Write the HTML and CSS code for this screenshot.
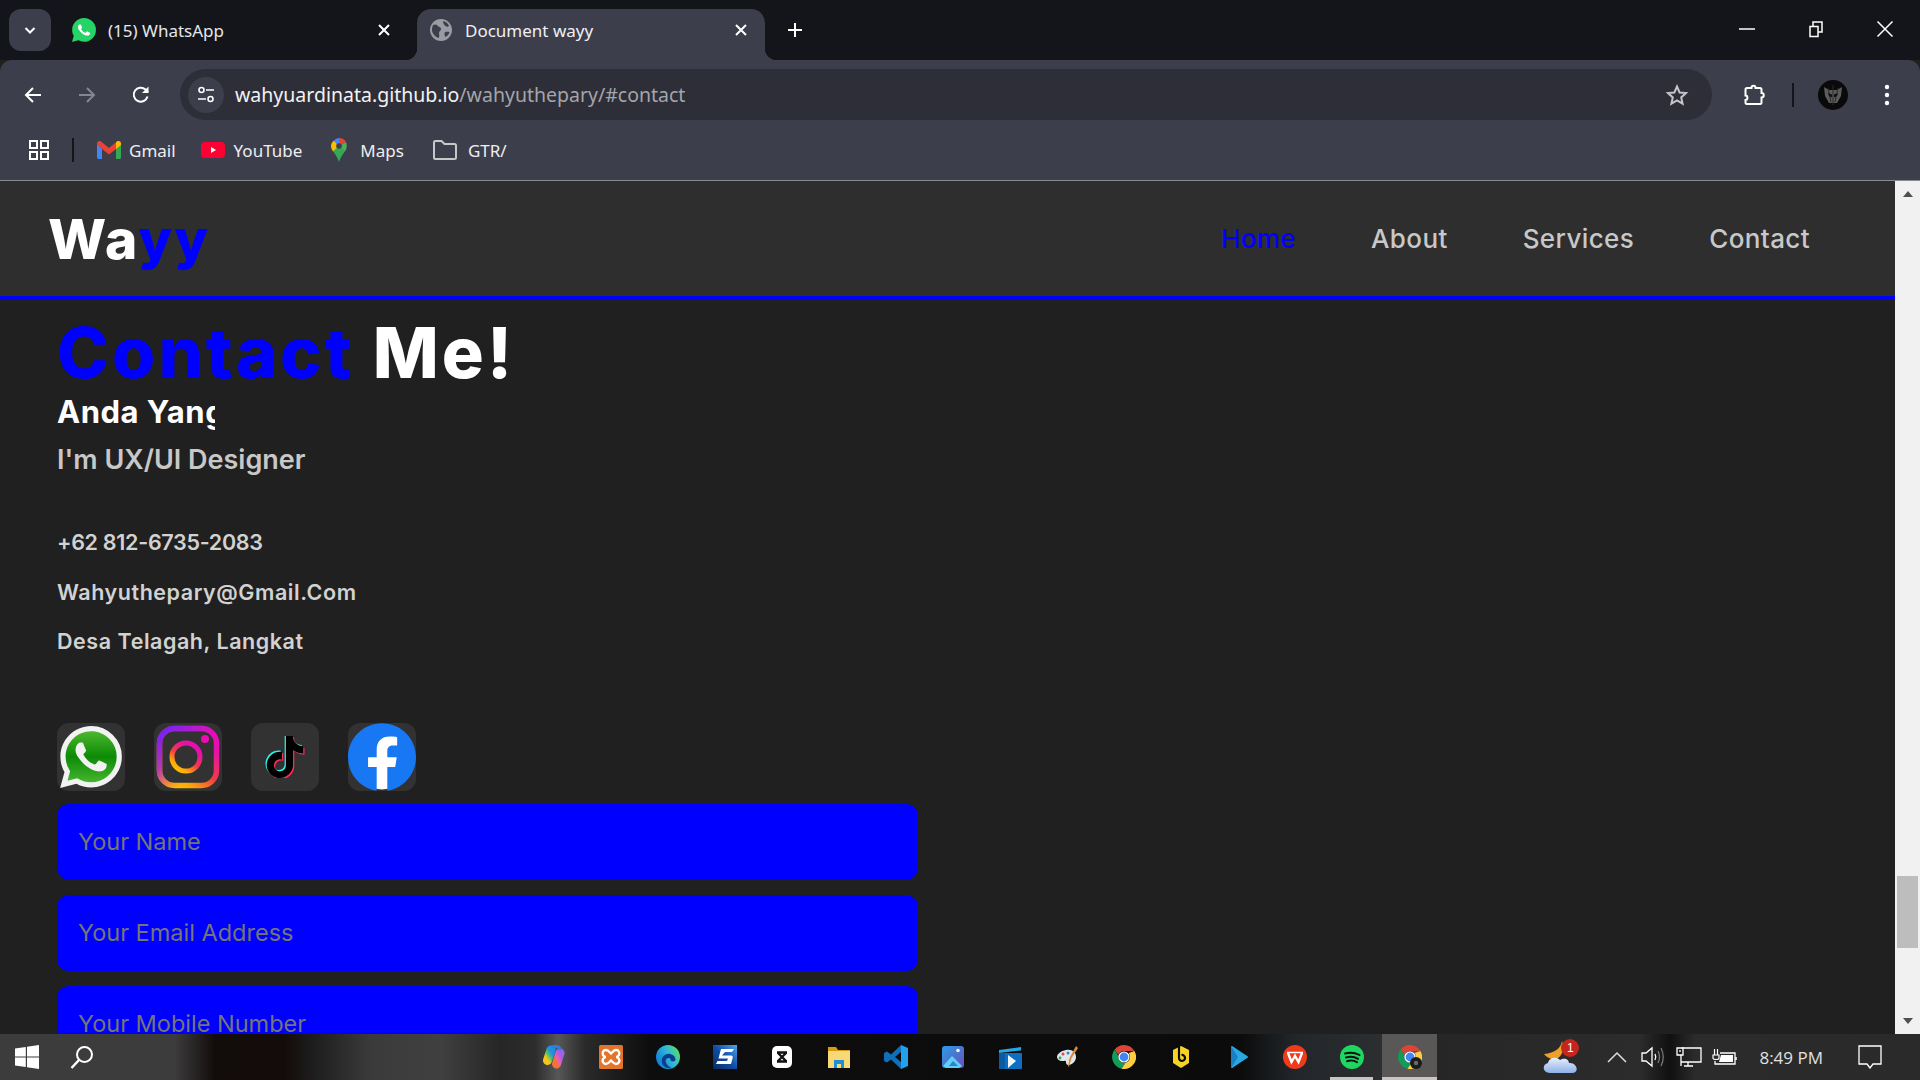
FILE: index.html
```html
<!DOCTYPE html>
<html lang="en">
<head>
    <meta charset="UTF-8">
    <meta name="viewport" content="width=device-width, initial-scale=1.0">
    <title>Document wayy</title>
    <link rel="stylesheet" href="styles.css">
</head>
<body>
    <!-- browser tabs -->
    <div class="tabstrip">
        <button class="tab-search" aria-label="Search tabs">
            <svg width="14" height="14" viewBox="0 0 14 14"><path d="M2.500 5 7 9.500 11.500 5" fill="none" stroke="#fff" stroke-width="2"/></svg>
        </button>
        <div class="tab tab-idle">
            <svg class="favicon" viewBox="0 0 24 24">
                <path fill="#25d366" d="M12.050 0C5.495 0 .16 5.335.157 11.892c0 2.096.547 4.142 1.588 5.945L.057 24l6.305-1.654a11.882 11.882 0 005.683 1.448h.005c6.554 0 11.89-5.335 11.893-11.893A11.821 11.821 0 0020.463 3.488 11.815 11.815 0 0012.050 0z"/>
                <path fill="#fff" d="M17.472 14.382c-.297-.149-1.758-.867-2.03-.967-.273-.099-.471-.148-.67.15-.197.297-.767.966-.94 1.164-.173.199-.347.223-.644.075-.297-.15-1.255-.463-2.39-1.475-.883-.788-1.48-1.761-1.653-2.059-.173-.297-.018-.458.13-.606.134-.133.298-.347.446-.52.149-.174.198-.298.298-.497.099-.198.05-.371-.025-.52-.075-.149-.669-1.612-.916-2.207-.242-.579-.487-.5-.669-.51-.173-.008-.371-.01-.57-.01-.198 0-.52.074-.792.372-.272.297-1.04 1.016-1.04 2.479 0 1.462 1.065 2.875 1.213 3.074.149.198 2.096 3.2 5.077 4.487.709.306 1.262.489 1.694.625.712.227 1.36.195 1.871.118.571-.085 1.758-.719 2.006-1.413.248-.694.248-1.289.173-1.413-.074-.124-.272-.198-.57-.347z"/>
            </svg>
            <span class="tab-title">(15) WhatsApp</span>
            <svg class="tab-close" viewBox="0 0 12 12"><path d="M1 1l10 10M11 1 1 11" stroke="#fff" stroke-width="2"/></svg>
        </div>
        <div class="tab tab-active">
            <svg class="favicon" viewBox="0 0 24 24">
                <circle cx="12" cy="12" r="11" fill="#9a9ba3"/>
                <path fill="#3d3e4b" d="M4 7c2-1 4-.5 5 1s3 1 3 3-2 2-2 4 1 3-.5 5C6 19 3 15 3 12c0-2 .4-3.500 1-5zM14 3c3 .5 5 2.500 6 5-1 1-2.500 1-3.500 0S14 6 14 3zM16 14c1.500-.5 3-.5 4.500 0-.5 2-2 4-4 5-1-1-1.500-3.500-.5-5z"/>
            </svg>
            <span class="tab-title">Document wayy</span>
            <svg class="tab-close" viewBox="0 0 12 12"><path d="M1 1l10 10M11 1 1 11" stroke="#fff" stroke-width="2"/></svg>
        </div>
        <svg class="new-tab" viewBox="0 0 16 16"><path d="M8 1v14M1 8h14" stroke="#fff" stroke-width="2"/></svg>
        <div class="window-btns">
            <svg viewBox="0 0 18 18" class="win-btn"><path d="M1 9h16" stroke="#fff" stroke-width="1.500"/></svg>
            <svg viewBox="0 0 18 18" class="win-btn"><path d="M3 6.500h8v10H3zM6 6V2h9v10h-3.500" fill="none" stroke="#fff" stroke-width="1.500"/></svg>
            <svg viewBox="0 0 18 18" class="win-btn"><path d="M1.500 1.500l15 15M16.500 1.500l-15 15" stroke="#fff" stroke-width="1.500"/></svg>
        </div>
    </div>

    <!-- address bar -->
    <div class="toolbar">
        <div class="nav-btns">
            <svg viewBox="0 0 20 20" class="nav-btn"><path d="M18 10H3M10 3l-7 7 7 7" fill="none" stroke="#fff" stroke-width="2"/></svg>
            <svg viewBox="0 0 20 20" class="nav-btn"><path d="M2 10h15M10 3l7 7-7 7" fill="none" stroke="#85868f" stroke-width="2"/></svg>
            <svg viewBox="0 0 20 20" class="nav-btn"><path d="M16.500 11.500A7 7 0 1 1 14.500 4.500L17 7" fill="none" stroke="#fff" stroke-width="2"/><path d="M17.500 1.500v6.500H11z" fill="#fff"/></svg>
        </div>
        <div class="omnibox">
            <span class="site-info">
                <svg viewBox="0 0 20 20" width="20" height="20"><circle cx="5.500" cy="5" r="2.500" fill="none" stroke="#fff" stroke-width="1.600"/><path d="M10 5h8M2 14h8" stroke="#fff" stroke-width="1.600"/><circle cx="14.500" cy="14" r="2.500" fill="none" stroke="#fff" stroke-width="1.600"/></svg>
            </span>
            <span class="url">wahyuardinata.github.io<span class="url-path">/wahyuthepary/#contact</span></span>
            <svg class="star" viewBox="0 0 24 24"><path d="M12 3.500l2.600 6 6.400.6-4.800 4.300 1.400 6.300L12 17.400l-5.600 3.300 1.400-6.300L3 10.100l6.400-.6z" fill="none" stroke="#c4c5ca" stroke-width="2"/></svg>
        </div>
        <svg class="ext" viewBox="0 0 24 24"><path d="M5 5h4.500c0-3 4-3 4 0H18c1 0 1.500.5 1.500 1.500V10c3 0 3 4.500 0 4.500v5c0 1-.5 1.500-1.500 1.500H5c-1 0-1.500-.5-1.500-1.500V17c2.500 0 2.500-4.500 0-4.500v-6C3.500 5.500 4 5 5 5z" fill="none" stroke="#fff" stroke-width="2"/></svg>
        <span class="toolbar-sep"></span>
        <svg class="avatar" viewBox="0 0 30 30">
            <circle cx="15" cy="15" r="15" fill="#0a0a0a"/>
            <path d="M6 7l5 3h8l5-3-1 9-4 7h-8l-4-7z" fill="#5c5c5c"/>
            <path d="M15 5v20M10 8l3 14M20 8l-3 14" stroke="#2a2a2a" stroke-width="1"/>
            <path d="M10 13l4 1.500v3l-3-1.500zM20 13l-4 1.500v3l3-1.500z" fill="#111"/>
        </svg>
        <svg class="menu-dots" viewBox="0 0 6 22"><circle cx="3" cy="3" r="2.200" fill="#fff"/><circle cx="3" cy="11" r="2.200" fill="#fff"/><circle cx="3" cy="19" r="2.200" fill="#fff"/></svg>
    </div>

    <!-- bookmarks -->
    <div class="bookmarks">
        <svg class="apps" viewBox="0 0 22 22"><path d="M2 2h7v7H2zM13 2h7v7h-7zM2 13h7v7H2zM13 13h7v7h-7z" fill="none" stroke="#fff" stroke-width="2"/></svg>
        <span class="bm-sep"></span>
        <div class="bookmark bm-gmail">
            <svg viewBox="0 0 24 18" class="bm-icon">
                <path fill="#4285f4" d="M0 3v13.500C0 17.300.7 18 1.500 18H5V8z"/>
                <path fill="#34a853" d="M24 3v13.500c0 .8-.7 1.500-1.500 1.500H19V8z"/>
                <path fill="#ea4335" d="M0 2.500C0 .5 2.300-.7 4 .5L12 7l8-6.500c1.700-1.200 4 0 4 2V4l-5 4-7 5.500L5 8 0 4z"/>
                <path fill="#fbbc04" d="M19 1.500l1-1c1.700-1.200 4 0 4 2V4l-5 4z"/>
            </svg>
            <span>Gmail</span>
        </div>
        <div class="bookmark bm-yt">
            <svg viewBox="0 0 24 16" class="bm-icon bm-yt-icon"><rect width="24" height="16" rx="4" fill="#ff0033"/><path d="M10 5v6l5-3z" fill="#fff"/></svg>
            <span>YouTube</span>
        </div>
        <div class="bookmark bm-maps">
            <svg viewBox="0 0 16 24" class="bm-pin">
                <path fill="#34a853" d="M2 13c2 3.500 5 6.500 6 11 1-4.500 4-7.500 6-11l-6-5z"/>
                <path fill="#fbbc04" d="M0 8c0 2 .8 3.500 2 5.500L8 8 3 2.500C1 4 0 5.800 0 8z"/>
                <path fill="#4285f4" d="M3 2.500C4.300 1 6 0 8 0l2 3-2 5z"/>
                <path fill="#ea4335" d="M8 0c3 0 5.500 1.500 7 4l-7 4z"/>
                <path fill="#4fae5c" d="M15 4c1.300 3 1 6.500-1 9.500L8 8z"/>
                <circle cx="8" cy="8" r="2.800" fill="#3d3e4b"/>
            </svg>
            <span>Maps</span>
        </div>
        <div class="bookmark bm-folder">
            <svg viewBox="0 0 24 20" class="bm-icon"><path d="M1 2.500C1 1.700 1.700 1 2.500 1h6l3 3h10c.8 0 1.500.7 1.500 1.500v12c0 .8-.7 1.500-1.500 1.500h-19C1.700 19 1 18.300 1 17.500z" fill="none" stroke="#c8c8ca" stroke-width="2"/></svg>
            <span>GTR/</span>
        </div>
    </div>

    <!-- the page itself -->
    <div class="viewport">
        <div class="site">
            <header class="site-header">
                <a class="logo">Wa<span>yy</span></a>
                <nav class="site-nav">
                    <a class="active">Home</a>
                    <a>About</a>
                    <a>Services</a>
                    <a>Contact</a>
                </nav>
            </header>
            <section class="contact">
                <h2 class="contact-title"><span>Contact</span> Me!</h2>
                <h3 class="typing">Anda Yang Cari</h3>
                <h4 class="role">I'm UX/UI Designer</h4>
                <ul class="contact-list">
                    <li class="contact-phone">+62 812-6735-2083</li>
                    <li>Wahyuthepary@Gmail.Com</li>
                    <li>Desa Telagah, Langkat</li>
                </ul>
                <div class="socials">
                    <a class="social">
                        <svg viewBox="0 0 24 24" class="social-wa">
                            <defs><linearGradient id="waGreen" x1="0" y1="0" x2="0" y2="1"><stop offset="0" stop-color="#4cb82e"/><stop offset=".5" stop-color="#0c8a07"/><stop offset="1" stop-color="#46b52f"/></linearGradient></defs>
                            <path fill="#f2f2f2" d="M12.050 0C5.495 0 .16 5.335.157 11.892c0 2.096.547 4.142 1.588 5.945L.057 24l6.305-1.654a11.882 11.882 0 005.683 1.448h.005c6.554 0 11.89-5.335 11.893-11.893A11.821 11.821 0 0020.463 3.488 11.815 11.815 0 0012.050 0z"/>
                            <path fill="url(#waGreen)" d="M12.051 21.785h-.004a9.87 9.87 0 01-5.031-1.378l-.361-.214-3.741.982.998-3.648-.235-.374a9.86 9.86 0 01-1.51-5.26c.001-5.45 4.436-9.884 9.888-9.884 2.64 0 5.122 1.03 6.988 2.898a9.825 9.825 0 012.893 6.994c-.003 5.45-4.437 9.884-9.885 9.884z"/>
                            <path fill="#f2f2f2" d="M17.472 14.382c-.297-.149-1.758-.867-2.03-.967-.273-.099-.471-.148-.67.15-.197.297-.767.966-.94 1.164-.173.199-.347.223-.644.075-.297-.15-1.255-.463-2.39-1.475-.883-.788-1.48-1.761-1.653-2.059-.173-.297-.018-.458.13-.606.134-.133.298-.347.446-.52.149-.174.198-.298.298-.497.099-.198.05-.371-.025-.52-.075-.149-.669-1.612-.916-2.207-.242-.579-.487-.5-.669-.51-.173-.008-.371-.01-.57-.01-.198 0-.52.074-.792.372-.272.297-1.04 1.016-1.04 2.479 0 1.462 1.065 2.875 1.213 3.074.149.198 2.096 3.2 5.077 4.487.709.306 1.262.489 1.694.625.712.227 1.36.195 1.871.118.571-.085 1.758-.719 2.006-1.413.248-.694.248-1.289.173-1.413-.074-.124-.272-.198-.57-.347z"/>
                        </svg>
                    </a>
                    <a class="social">
                        <svg viewBox="0 0 68 68" class="social-full">
                            <defs>
                                <linearGradient id="igMain" x1=".15" y1="1" x2=".85" y2="0"><stop offset="0" stop-color="#fcc400"/><stop offset=".18" stop-color="#fba70c"/><stop offset=".45" stop-color="#f43b45"/><stop offset=".8" stop-color="#e312a8"/><stop offset="1" stop-color="#ec08bb"/></linearGradient>
                                <linearGradient id="igTop" x1="0" y1="0" x2=".7" y2=".6"><stop offset="0" stop-color="#6a24fb"/><stop offset=".5" stop-color="#a41ddc" stop-opacity=".8"/><stop offset="1" stop-color="#e312a8" stop-opacity="0"/></linearGradient>
                            </defs>
                            <rect x="5.500" y="5.500" width="57" height="57" rx="15" fill="none" stroke="url(#igMain)" stroke-width="5.500"/>
                            <rect x="5.500" y="5.500" width="57" height="57" rx="15" fill="none" stroke="url(#igTop)" stroke-width="5.500"/>
                            <circle cx="32" cy="34" r="14" fill="none" stroke="url(#igMain)" stroke-width="5"/>
                            <circle cx="51" cy="16" r="4" fill="#ee0ab5"/>
                        </svg>
                    </a>
                    <a class="social">
                        <svg viewBox="0 0 24 24" class="social-tiktok">
                            <path fill="#25f4ee" transform="translate(-.7 -.7)" d="M12.525.02c1.31-.02 2.61-.01 3.91-.02.08 1.53.63 3.09 1.75 4.17 1.12 1.11 2.7 1.62 4.24 1.79v4.03c-1.44-.05-2.89-.35-4.2-.97-.57-.26-1.1-.59-1.62-.93-.01 2.92.01 5.84-.02 8.75-.08 1.4-.54 2.79-1.35 3.94-1.31 1.92-3.58 3.17-5.91 3.21-1.43.08-2.86-.31-4.08-1.03-2.02-1.19-3.44-3.37-3.65-5.71-.02-.5-.03-1-.01-1.49.18-1.9 1.12-3.72 2.58-4.96 1.66-1.44 3.98-2.13 6.15-1.72.02 1.48-.04 2.96-.04 4.44-.99-.32-2.15-.23-3.02.37-.63.41-1.11 1.04-1.36 1.75-.21.51-.15 1.07-.14 1.61.24 1.64 1.82 3.02 3.5 2.87 1.12-.01 2.19-.66 2.77-1.61.19-.33.4-.67.41-1.06.1-1.79.06-3.57.07-5.36.01-4.03-.01-8.05.02-12.07z"/>
                            <path fill="#fe2c55" transform="translate(.7 .7)" d="M12.525.02c1.31-.02 2.61-.01 3.91-.02.08 1.53.63 3.09 1.75 4.17 1.12 1.11 2.7 1.62 4.24 1.79v4.03c-1.44-.05-2.89-.35-4.2-.97-.57-.26-1.1-.59-1.62-.93-.01 2.92.01 5.84-.02 8.75-.08 1.4-.54 2.79-1.35 3.94-1.31 1.92-3.58 3.17-5.91 3.21-1.43.08-2.86-.31-4.08-1.03-2.02-1.19-3.44-3.37-3.65-5.71-.02-.5-.03-1-.01-1.49.18-1.9 1.12-3.72 2.58-4.96 1.66-1.44 3.98-2.13 6.15-1.72.02 1.48-.04 2.96-.04 4.44-.99-.32-2.15-.23-3.02.37-.63.41-1.11 1.04-1.36 1.75-.21.51-.15 1.07-.14 1.61.24 1.64 1.82 3.02 3.5 2.87 1.12-.01 2.19-.66 2.77-1.61.19-.33.4-.67.41-1.06.1-1.79.06-3.57.07-5.36.01-4.03-.01-8.05.02-12.07z"/>
                            <path fill="#000" d="M12.525.02c1.31-.02 2.61-.01 3.91-.02.08 1.53.63 3.09 1.75 4.17 1.12 1.11 2.7 1.62 4.24 1.79v4.03c-1.44-.05-2.89-.35-4.2-.97-.57-.26-1.1-.59-1.62-.93-.01 2.92.01 5.84-.02 8.75-.08 1.4-.54 2.79-1.35 3.94-1.31 1.92-3.58 3.17-5.91 3.21-1.43.08-2.86-.31-4.08-1.03-2.02-1.19-3.44-3.37-3.65-5.71-.02-.5-.03-1-.01-1.49.18-1.9 1.12-3.72 2.58-4.96 1.66-1.44 3.98-2.13 6.15-1.72.02 1.48-.04 2.96-.04 4.44-.99-.32-2.15-.23-3.02.37-.63.41-1.11 1.04-1.36 1.75-.21.51-.15 1.07-.14 1.61.24 1.64 1.82 3.02 3.5 2.87 1.12-.01 2.19-.66 2.77-1.61.19-.33.4-.67.41-1.06.1-1.79.06-3.57.07-5.36.01-4.03-.01-8.05.02-12.07z"/>
                        </svg>
                    </a>
                    <a class="social">
                        <svg viewBox="0 0 24 24" class="social-full">
                            <circle cx="12" cy="12" r="11.500" fill="#fff"/>
                            <path fill="#1877f2" d="M24 12.073c0-6.627-5.373-12-12-12s-12 5.373-12 12c0 5.990 4.388 10.954 10.125 11.854v-8.385H7.078v-3.47h3.047V9.430c0-3.007 1.792-4.669 4.533-4.669 1.312 0 2.686.235 2.686.235v2.953H15.830c-1.491 0-1.956.925-1.956 1.874v2.250h3.328l-.532 3.470h-2.796v8.385C19.612 23.027 24 18.062 24 12.073z"/>
                        </svg>
                    </a>
                </div>
                <form class="contact-form">
                    <input type="text" placeholder="Your Name">
                    <input type="email" placeholder="Your Email Address">
                    <input type="tel" placeholder="Your Mobile Number">
                </form>
            </section>
        </div>
        <div class="scrollbar">
            <svg class="sb-arrow" viewBox="0 0 12 8"><path d="M6 1l5 6H1z" fill="#505050"/></svg>
            <div class="sb-thumb"></div>
            <svg class="sb-arrow" viewBox="0 0 12 8"><path d="M6 7l5-6H1z" fill="#505050"/></svg>
        </div>
    </div>

    <!-- windows taskbar -->
    <div class="taskbar">
        <svg class="tb-start" viewBox="0 0 24 24"><path fill="#fff" d="M0 3.400 10.800 2v9.500H0zM12 1.800 24 0v11.500H12zM0 12.500h10.800V22L0 20.600zM12 12.500h12V24l-12-1.800z"/></svg>
        <svg class="tb-search" viewBox="0 0 24 24"><circle cx="14.500" cy="9.500" r="7.500" fill="none" stroke="#fff" stroke-width="2"/><path d="M9 15l-7.500 8" stroke="#fff" stroke-width="2.500"/></svg>
        <div class="tb-apps">
            <span class="tb-app">
                <svg viewBox="0 0 24 24">
                    <defs>
                        <linearGradient id="cpA" x1=".7" y1="0" x2=".2" y2="1"><stop offset="0" stop-color="#1f8fe6"/><stop offset=".55" stop-color="#4fc46a"/><stop offset="1" stop-color="#f4c51a"/></linearGradient>
                        <linearGradient id="cpB" x1=".8" y1="0" x2=".2" y2="1"><stop offset="0" stop-color="#a45fe8"/><stop offset=".6" stop-color="#e861b0"/><stop offset="1" stop-color="#f6703c"/></linearGradient>
                    </defs>
                    <path d="M9 5 5.500 15.500" fill="none" stroke="url(#cpA)" stroke-width="9" stroke-linecap="round"/>
                    <path d="M18 8 14.500 19" fill="none" stroke="url(#cpB)" stroke-width="9" stroke-linecap="round"/>
                    <path d="M11 1.500h3.500c2 0 3 1 3.500 2.500" fill="none" stroke="#2b7de0" stroke-width="3" stroke-linecap="round"/>
                </svg>
            </span>
            <span class="tb-app">
                <svg viewBox="0 0 24 24"><rect width="24" height="24" rx="1.500" fill="#e2752b"/><path d="M7 5c-3 0-4 3-3 5 .5 1 1.500 2 3 2-1.500 0-2.500 1-3 2-1 2 0 5 3 5 2 0 3.500-2 5-3.500 1.500 1.500 3 3.500 5 3.500 3 0 4-3 3-5-.5-1-1.500-2-3-2 1.500 0 2.500-1 3-2 1-2 0-5-3-5-2 0-3.500 2-5 3.500C10.500 7 9 5 7 5z" fill="none" stroke="#fff" stroke-width="2.400"/></svg>
            </span>
            <span class="tb-app">
                <svg viewBox="0 0 24 24">
                    <defs><linearGradient id="edgeA" x1="0" y1=".7" x2="1" y2=".2"><stop offset="0" stop-color="#0f7ad6"/><stop offset=".55" stop-color="#2fb9d8"/><stop offset="1" stop-color="#5dde5e"/></linearGradient></defs>
                    <circle cx="12" cy="12" r="12" fill="url(#edgeA)"/>
                    <path d="M6 18C4.500 12 9.500 8 14 9c3.500.7 5.500 3 5.500 5.500 0 1-1 2-2.500 2-2 0-2.500-1-2.500-2 0-2-3.500-2-4.500 0-1 2.500.5 6 5.500 8.500C10 24 7 21 6 18z" fill="#0b3f8c"/>
                </svg>
            </span>
            <span class="tb-app">
                <svg viewBox="0 0 24 24">
                    <defs><linearGradient id="pbBg" x1="1" y1="0" x2="0" y2="1"><stop offset="0" stop-color="#4ca6ee"/><stop offset=".5" stop-color="#0f4fa6"/><stop offset="1" stop-color="#08285f"/></linearGradient></defs>
                    <rect width="24" height="24" fill="url(#pbBg)"/>
                    <path d="M8 4h13l-2 3h-7l-3 3.500h9c2 0 2 1.500 1.500 3L18 19H3l1.500-3h9.500l1-2.500H5.500z" fill="#fff"/>
                </svg>
            </span>
            <span class="tb-app">
                <svg viewBox="0 0 24 24"><rect x="2" y="1" width="20" height="22" rx="5" fill="#fff"/><path d="M7 7.500h10M7 16.500h10M8 8l8 8M16 8l-8 8" fill="none" stroke="#111" stroke-width="2.400"/></svg>
            </span>
            <span class="tb-app">
                <svg viewBox="0 0 24 24"><path fill="#d89b12" d="M1 2h8l2 3h12v3H1z"/><path fill="#f9d876" d="M1 6h22v17H1z"/><path fill="#1c8fd8" d="M7 15h10v8h-3v-4h-4v4H7z"/></svg>
            </span>
            <span class="tb-app">
                <svg viewBox="0 0 24 24"><path fill="#0f6fb8" d="M17 0 7 9.500 3 6.500 0 8v8l3 1.500 4-3L17 24l1-3V3zm0 7v10l-6-5z"/><path fill="#22a2ee" d="M17 0l7 3v18l-7 3z"/></svg>
            </span>
            <span class="tb-app">
                <svg viewBox="0 0 24 24">
                    <defs><linearGradient id="phBg" x1="0" y1="0" x2="1" y2="1"><stop offset="0" stop-color="#2a9ce8"/><stop offset="1" stop-color="#6f4db8"/></linearGradient></defs>
                    <rect x="1" y="1" width="22" height="22" rx="3" fill="url(#phBg)"/>
                    <path d="M2 21l9-10 10 10-3 2H5z" fill="#5fd0f5"/><path d="M8 21l4-5 5 5z" fill="#2f7fd8"/>
                    <circle cx="17" cy="5.500" r="1.800" fill="#e8f4ff"/>
                </svg>
            </span>
            <span class="tb-app">
                <svg viewBox="0 0 24 24"><path fill="#25a8e8" d="M1 5l22-3v3.500L1 8z"/><rect x="1" y="8" width="23" height="16" rx="1" fill="#0e6ec2"/><path fill="#0a5aa6" d="M1 8h6v16H1z"/><path fill="#f1f7fc" d="M10 10l8 6-8 7z"/></svg>
            </span>
            <span class="tb-app">
                <svg viewBox="0 0 24 24"><path fill="#dfe7ee" d="M11 5c6-1 10 2 10 7 0 3-2 7-7 8-2 .5-3-1-3-3 0-2-2-1-4-1-3 0-5-2-5-4 0-3 4-6 9-7z"/><circle cx="8" cy="9" r="1.500" fill="#e04e3a"/><circle cx="13" cy="8" r="1.500" fill="#3d7fd4"/><circle cx="5" cy="13" r="1.400" fill="#33a853"/><circle cx="15" cy="15" r="1.500" fill="#f0b52b"/><path d="M21 1l2 2-7 11-2 8-1-1 2-9z" fill="#d88a3c"/></svg>
            </span>
            <span class="tb-app">
                <svg viewBox="0 0 24 24">
                    <path fill="#db4437" d="M12 0a12 12 0 0 1 10.400 6H12a6 6 0 0 0-5.600 3.800L2.700 4.500A12 12 0 0 1 12 0z"/>
                    <path fill="#0f9d58" d="M2.700 4.500l3.800 6.400a6 6 0 0 0 6.900 7L9.500 23.700A12 12 0 0 1 2.700 4.500z"/>
                    <path fill="#ffcd40" d="M22.400 6A12 12 0 0 1 9.500 23.700l4-6a6 6 0 0 0 3.100-9.700z"/>
                    <circle cx="12" cy="12" r="5.600" fill="#fff"/><circle cx="12" cy="12" r="4.400" fill="#4285f4"/>
                </svg>
            </span>
            <span class="tb-app">
                <svg viewBox="0 0 24 24"><path fill="#f5d327" d="M12 1l8 4v13l-8 5-8-5V5z"/><path d="M10 1v12a3 3 0 1 0 2.500-3" fill="none" stroke="#0a0a0a" stroke-width="2.200"/></svg>
            </span>
            <span class="tb-app">
                <svg viewBox="0 0 24 24"><path fill="#28a9e0" stroke="#28a9e0" stroke-width="2" stroke-linejoin="round" d="M6 2l15 10L6 22z"/><path fill="#1a7fc4" d="M5 1l7 11-7 11z"/></svg>
            </span>
            <span class="tb-app">
                <svg viewBox="0 0 24 24"><circle cx="12" cy="12" r="12" fill="#ee3b1c"/><path d="M5 8l3.500 9 3.500-6 3.500 6L19 8" fill="none" stroke="#fff" stroke-width="2.400"/><path d="M4 7.500h16" stroke="#fff" stroke-width="1.500"/></svg>
            </span>
            <span class="tb-app tb-running">
                <svg viewBox="0 0 24 24"><circle cx="12" cy="12" r="12" fill="#1ed760"/><path d="M5 8.500c5-1.500 10-1 14.500 1.500M6 12.500c4.500-1.200 8.500-.8 12 1.300M7 16.200c3.500-1 7-.7 10 1" fill="none" stroke="#111" stroke-width="2" stroke-linecap="round"/></svg>
            </span>
            <span class="tb-app tb-active">
                <svg viewBox="0 0 24 24">
                    <path fill="#db4437" d="M12 0a12 12 0 0 1 10.400 6H12a6 6 0 0 0-5.600 3.800L2.700 4.500A12 12 0 0 1 12 0z"/>
                    <path fill="#0f9d58" d="M2.700 4.500l3.800 6.400a6 6 0 0 0 6.900 7L9.500 23.700A12 12 0 0 1 2.700 4.500z"/>
                    <path fill="#ffcd40" d="M22.400 6A12 12 0 0 1 9.500 23.700l4-6a6 6 0 0 0 3.100-9.700z"/>
                    <circle cx="12" cy="12" r="5.600" fill="#fff"/><circle cx="12" cy="12" r="4.400" fill="#4285f4"/>
                    <circle cx="18" cy="18" r="6" fill="#1c1c1c"/><circle cx="18" cy="18" r="2.200" fill="#6a6a6a"/>
                </svg>
            </span>
        </div>
        <div class="tray">
            <span class="weather">
                <svg viewBox="0 0 36 34" width="36" height="34">
                    <defs><linearGradient id="cloud" x1="0" y1="0" x2="0" y2="1"><stop offset="0" stop-color="#e8eefb"/><stop offset="1" stop-color="#8db0ea"/></linearGradient></defs>
                    <path d="M19 1C18 8 12 13 1 14c3 4 8 6 12 5 6-2 9-10 6-18z" fill="#f0a02a"/>
                    <path d="M7 33c-8 0-8-9-2-10 1-5 8-7 12-3 5-3 9 0 9 3 8-1 11 10 3 10z" fill="url(#cloud)"/>
                </svg>
                <span class="weather-badge">1</span>
            </span>
            <svg class="tray-ico chevron" viewBox="0 0 20 12"><path d="M1 11l9-9 9 9" fill="none" stroke="#ddd" stroke-width="1.500"/></svg>
            <svg class="tray-ico speaker" viewBox="0 0 24 22"><path d="M1 7h4l6-5v18l-6-5H1z" fill="none" stroke="#fff" stroke-width="1.300"/><path d="M14 8c1 2 1 4 0 6" fill="none" stroke="#fff" stroke-width="1.300"/><path d="M17 5c2 4 2 8 0 12M20 2c3 6 3 12 0 18" fill="none" stroke="#777" stroke-width="1.300"/></svg>
            <svg class="tray-ico network" viewBox="0 0 26 20"><path d="M6 1h19v14H5M5 8v11M12 15v4M8 19h9" fill="none" stroke="#fff" stroke-width="1.300"/><path d="M1 1h6v7H1zM4 3v2" fill="none" stroke="#fff" stroke-width="1.300"/></svg>
            <svg class="tray-ico battery" viewBox="0 0 26 18"><path d="M2 7h6v3c0 2-6 2-6 0zM3.500 1v6M6.500 1v6" fill="none" stroke="#fff" stroke-width="1.200"/><path d="M9 5h15v11H4v-3" fill="none" stroke="#fff" stroke-width="1.300"/><path d="M10 7h12v7H8z" fill="#fff"/><path d="M25 9v3" stroke="#fff" stroke-width="1.500"/></svg>
            <span class="clock">8:49 PM</span>
            <svg class="tray-ico notif" viewBox="0 0 24 24"><path d="M1 1h22v18h-8l-3 4-3-4H1z" fill="none" stroke="#fff" stroke-width="1.300"/></svg>
        </div>
    </div>
</body>
</html>
```

FILE: styles.css
```css
* {
    box-sizing: border-box;
}
html, body {
    margin: 0;
    height: 100%;
}
body {
    display: flex;
    flex-direction: column;
    height: 100vh;
    overflow: hidden;
    background-color: #202020;
    font-family: "Noto Sans", sans-serif;
}
svg {
    display: block;
    flex-shrink: 0;
}

/* tabs */
.tabstrip {
    display: flex;
    align-items: flex-end;
    height: 60px;
    padding-left: 9px;
    background-color: #14151a;
}
.tab-search {
    display: flex;
    align-items: center;
    justify-content: center;
    width: 42px;
    height: 42px;
    margin-bottom: 9px;
    padding: 0;
    border: 0;
    border-radius: 12px;
    background-color: #3d3e4b;
}
.tab {
    position: relative;
    display: flex;
    align-items: center;
    height: 51px;
    padding: 0 18px 9px 12px;
    color: #e6e6e8;
    font-size: 17px;
}
.tab-idle {
    width: 357px;
    margin-left: 9px;
    padding-right: 27px;
}
.tab-active {
    width: 348px;
    border-radius: 14px 14px 0 0;
    background-color: #3d3e4b;
    color: #f0f0f2;
}
.tab-active::before,
.tab-active::after {
    content: "";
    position: absolute;
    bottom: 0;
    width: 12px;
    height: 12px;
}
.tab-active::before {
    left: -12px;
    background: radial-gradient(circle at 0 0, transparent 12px, #3d3e4b 12.500px);
}
.tab-active::after {
    right: -12px;
    background: radial-gradient(circle at 100% 0, transparent 12px, #3d3e4b 12.500px);
}
.favicon {
    width: 24px;
    height: 24px;
    margin-right: 12px;
}
.tab-title {
    flex: 1;
}
.tab-close {
    width: 12px;
    height: 12px;
}
.new-tab {
    width: 16px;
    height: 16px;
    margin: 0 0 22px 22px;
}
.window-btns {
    display: flex;
    gap: 51px;
    margin-left: auto;
    margin-bottom: 22px;
    padding-right: 26px;
}
.win-btn {
    width: 18px;
    height: 18px;
}

/* address bar */
.toolbar {
    display: flex;
    align-items: center;
    height: 60px;
    padding: 9px 0 0 23px;
    border-radius: 12px 12px 0 0;
    background-color: #3d3e4b;
}
.nav-btns {
    display: flex;
    gap: 34px;
}
.nav-btn {
    width: 20px;
    height: 20px;
}
.omnibox {
    display: flex;
    align-items: center;
    width: 1532px;
    height: 51px;
    margin-left: 29px;
    padding: 0 23px 0 8px;
    border-radius: 26px;
    background-color: #2e2e38;
}
.site-info {
    display: flex;
    align-items: center;
    justify-content: center;
    width: 36px;
    height: 36px;
    border-radius: 50%;
    background-color: #3d3e4b;
}
.url {
    flex: 1;
    margin-left: 11px;
    color: #f2f2f4;
    font-size: 19.500px;
}
.url-path {
    color: #a4a5ab;
}
.star {
    width: 24px;
    height: 24px;
}
.ext {
    width: 24px;
    height: 26px;
    margin-left: 30px;
}
.toolbar-sep {
    width: 2px;
    height: 24px;
    margin-left: 26px;
    background-color: #14151a;
}
.avatar {
    width: 30px;
    height: 30px;
    margin-left: 24px;
}
.menu-dots {
    width: 6px;
    height: 22px;
    margin-left: 36px;
}

/* bookmarks */
.bookmarks {
    display: flex;
    align-items: center;
    height: 61px;
    padding-left: 28px;
    border-bottom: 1px solid #8a8a8c;
    background-color: #3d3e4b;
    color: #eeeef0;
    font-size: 17px;
}
.apps {
    width: 22px;
    height: 22px;
}
.bm-sep {
    width: 2px;
    height: 24px;
    margin: 0 23px 0 22px;
    background-color: #14151a;
}
.bookmark {
    display: flex;
    align-items: center;
    gap: 9px;
}
.bm-icon {
    width: 24px;
    height: 20px;
}
.bm-yt-icon {
    height: 16px;
}
.bm-pin {
    width: 16px;
    height: 24px;
    margin-right: 4px;
}
.bm-gmail {
    gap: 8px;
}
.bm-yt {
    margin-left: 25px;
}
.bm-maps {
    margin-left: 29px;
}
.bm-folder {
    margin-left: 29px;
    gap: 11px;
}

/* the visited site */
.viewport {
    display: flex;
    flex: 1;
    min-height: 0;
}
.site {
    flex: 1;
    overflow: hidden;
    background-color: #202020;
    font-family: Inter, sans-serif;
}
.site-header {
    display: flex;
    align-items: center;
    justify-content: space-between;
    height: 119px;
    padding: 0 85px 0 48px;
    border-bottom: 4px solid #0000ff;
    background-color: #2e2e2e;
}
.logo {
    color: #fff;
    font-size: 55px;
    font-weight: 800;
    letter-spacing: 2px;
}
.logo span {
    color: #0000ff;
}
.site-nav {
    display: flex;
    gap: 75px;
    color: #c8c8c8;
    font-size: 26px;
    font-weight: 500;
    letter-spacing: .4px;
}
.site-nav .active {
    color: #0000ff;
}
.contact {
    padding: 16px 0 0 57px;
}
.contact-title {
    margin: 0;
    color: #fff;
    font-size: 70px;
    font-weight: 800;
    letter-spacing: 3px;
    line-height: 73px;
}
.contact-title span {
    color: #0000ff;
}
.typing {
    width: 158px;
    height: 46px;
    margin: 0;
    overflow: hidden;
    color: #fff;
    font-size: 31px;
    font-weight: 700;
    letter-spacing: .5px;
    line-height: 46px;
    white-space: nowrap;
}
.role {
    margin: 0;
    color: #c8c8c8;
    font-size: 27px;
    font-weight: 600;
    line-height: 49px;
}
.contact-list {
    margin: 34px 0 0;
    padding: 0;
    list-style: none;
    color: #d2d2d2;
    font-size: 21.500px;
    font-weight: 600;
    letter-spacing: .55px;
    line-height: 49.500px;
}
.contact-phone {
    letter-spacing: -.3px;
}
.socials {
    display: flex;
    gap: 29px;
    margin-top: 56px;
}
.social {
    display: flex;
    align-items: center;
    justify-content: center;
    width: 68px;
    height: 68px;
    border-radius: 12px;
    background-color: #323232;
}
.social-wa {
    width: 62px;
    height: 62px;
}
.social-tiktok {
    width: 44px;
    height: 42px;
}
.social-full {
    width: 68px;
    height: 68px;
}
.contact-form {
    display: flex;
    flex-direction: column;
    gap: 15px;
    margin-top: 13px;
}
.contact-form input {
    display: block;
    flex: none;
    width: 861px;
    height: 76px;
    padding: 0 21px;
    border: 0;
    border-radius: 12px;
    outline: 0;
    background-color: #0000ff;
    font-family: Inter, sans-serif;
    font-size: 23.500px;
}
.contact-form input::placeholder {
    color: #757575;
    opacity: 1;
}

/* fake scrollbar */
.scrollbar {
    display: flex;
    flex-direction: column;
    align-items: center;
    width: 25px;
    padding: 9px 0;
    background-color: #f1f1f1;
}
.sb-arrow {
    width: 12px;
    height: 8px;
}
.sb-thumb {
    width: 21px;
    height: 72px;
    margin: auto 0 69px;
    background-color: #bdbdbd;
}

/* windows taskbar */
.taskbar {
    display: flex;
    align-items: center;
    height: 46px;
    flex-shrink: 0;
    padding-left: 15px;
    background: linear-gradient(90deg, #3c3c3c 0, #3c3c3c 175px, #120c0b 215px, #140c0b 285px, #1e1e1e 315px, #3a3a3a 370px, #404040 440px, #262626 500px, #2c2c2c 535px, #575757 558px, #2a2a2a 585px, #0d0d0d 650px, #0b0b0b 1240px, #22262a 1295px, #2c2e30 1380px, #262626 1440px, #2c2c2c 1640px, #101010 1670px, #2b2b2b 1695px, #2a2a2a 1920px);
}
.tb-start {
    width: 24px;
    height: 24px;
}
.tb-search {
    width: 24px;
    height: 24px;
    margin-left: 31px;
}
.tb-apps {
    display: flex;
    margin-left: 431px;
}
.tb-app {
    display: flex;
    align-items: center;
    justify-content: center;
    width: 57px;
    height: 46px;
    padding: 3px 0;
}
.tb-app svg {
    width: 24px;
    height: 24px;
}
.tb-running {
    background: linear-gradient(#c8c4c4, #c8c4c4) center bottom / 43px 3px no-repeat;
}
.tb-active {
    width: 55px;
    margin-left: 2px;
    background: linear-gradient(#c8c4c4, #c8c4c4) center bottom / 100% 3px no-repeat, #5a5856;
}
.tray {
    display: flex;
    align-items: center;
    margin-left: auto;
    padding-right: 38px;
}
.weather {
    position: relative;
    width: 36px;
    height: 34px;
}
.weather-badge {
    position: absolute;
    top: -1px;
    right: 0;
    width: 18px;
    height: 18px;
    border-radius: 50%;
    background-color: #c4261d;
    color: #fff;
    font-family: "Liberation Sans", sans-serif;
    font-size: 12px;
    line-height: 18px;
    text-align: center;
}
.chevron {
    width: 20px;
    height: 12px;
    margin-left: 28px;
}
.speaker {
    width: 24px;
    height: 22px;
    margin-left: 14px;
}
.network {
    width: 26px;
    height: 20px;
    margin-left: 11px;
}
.battery {
    width: 26px;
    height: 18px;
    margin-left: 9px;
}
.clock {
    margin-left: 22px;
    color: #e0e0e0;
    font-family: "Open Sans", sans-serif;
    font-size: 17px;
}
.notif {
    width: 24px;
    height: 24px;
    margin-left: 35px;
}
```
